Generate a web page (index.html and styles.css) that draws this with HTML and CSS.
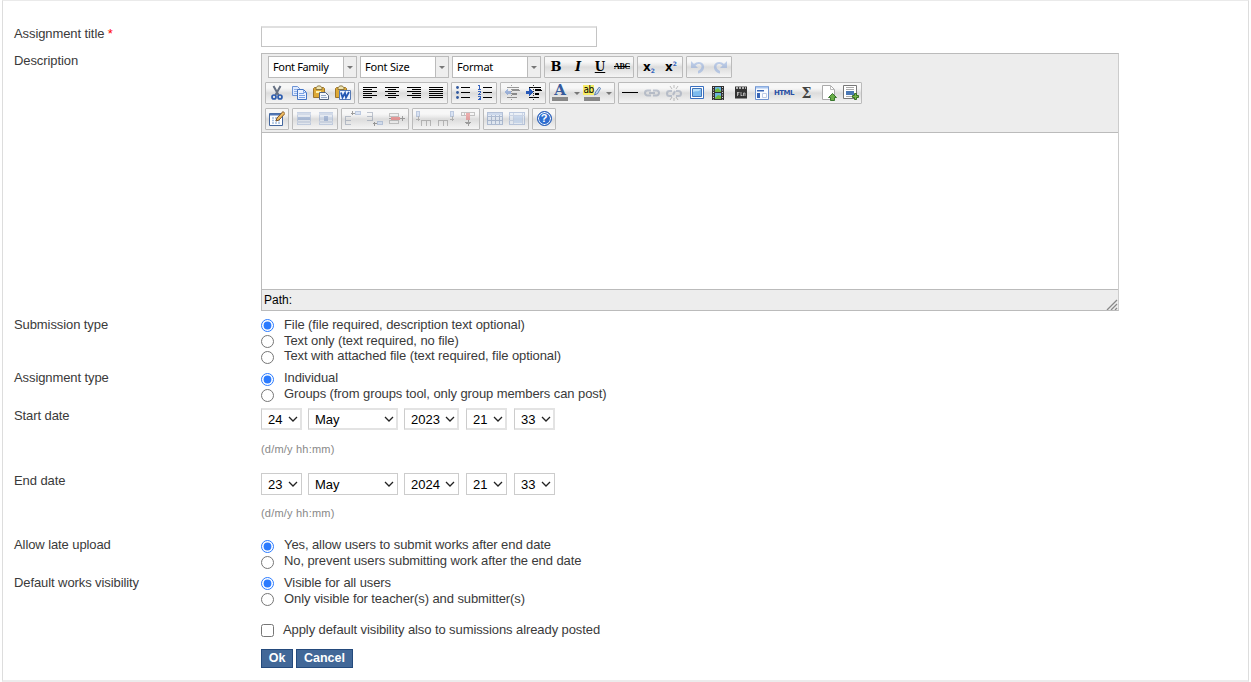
FILE: index.html
```html
<!DOCTYPE html>
<html lang="en">
<head>
<meta charset="utf-8">
<title>Assignment</title>
<link rel="stylesheet" href="styles.css">
</head>
<body>
<form class="panel">
  <div class="row row-title"><label class="label">Assignment title <span class="req">*</span></label><input class="title-input" type="text"></div>
  <div class="row row-desc"><label class="label">Description</label>
    <div class="editor">
      <div class="toolbar">
        <div class="bar bar-first">
          <div class="list"><span class="list-text family">Font Family</span><span class="list-arrow"></span></div>
          <div class="list"><span class="list-text">Font Size</span><span class="list-arrow"></span></div>
          <div class="list"><span class="list-text">Format</span><span class="list-arrow"></span></div>
          <div class="group">
            <span class="btn serif">B</span><span class="btn serif italic">I</span><span class="btn serif under">U</span><span class="btn strike">ABC</span>
          </div>
          <div class="group"><span class="btn script">x<sub>2</sub></span><span class="btn script">x<sup>2</sup></span></div>
          <div class="group">
            <span class="btn dim"><svg viewBox="0 0 16 16"><path d="M1 2v7h7L5.500 6.500C7 4.500 11 4 11.500 7c.3 2-1 4-3.500 5v2.500c4-1 6.500-4 6-7.500C13.300 2.500 7 1.500 4 5z" fill="#7c9fdc"/></svg></span>
            <span class="btn dim"><svg viewBox="0 0 16 16"><path d="M15 2v7H8l2.500-2.500C9 4.500 5 4 4.500 7c-.3 2 1 4 3.500 5v2.500C4 13.500 1.500 10.500 2 7 2.700 2.500 9 1.500 12 5z" fill="#7c9fdc"/></svg></span>
          </div>
        </div>
        <div class="bar">
          <div class="group">
            <span class="btn"><svg viewBox="0 0 16 16"><path d="M4.500 1l5 9M11.500 1l-5 9" fill="none" stroke="#657083" stroke-width="2"/><circle cx="5" cy="12" r="2" fill="none" stroke="#2d5cae" stroke-width="1.700"/><circle cx="11" cy="12" r="2" fill="none" stroke="#2d5cae" stroke-width="1.700"/></svg></span>
            <span class="btn"><svg viewBox="0 0 16 16"><path d="M1.500 1.500h5l2 2v7h-7z" fill="#e0ebff" stroke="#6d93d4"/><path d="M3 4.500h4M3 6.500h4M3 8.500h3" stroke="#8fb0e6"/><path d="M6.500 4.500h6l3 3v7h-9z" fill="#eaf2ff" stroke="#4474c4"/><path d="M12.500 4.500v3h3M8 8.500h5M8 10.500h6M8 12.500h6" fill="none" stroke="#7da3e4"/></svg></span>
            <span class="btn"><svg viewBox="0 0 16 16"><path d="M.5 3.500l1-1h9l1 1v9H.5z" fill="#dda936" stroke="#9b742c"/><path d="M3 3.500c0-3.500 6-3.500 6 0v1H3z" fill="#eee4b0" stroke="#8b763e"/><path d="M3 7h5" stroke="#fff2ae" stroke-width="2"/><path d="M6.500 7.500h6l3 3v4h-9z" fill="#f4f6fb" stroke="#53637f"/><path d="M8 10.500h5M8 12.500h6" stroke="#93a6c5"/></svg></span>
            <span class="btn"><svg viewBox="0 0 16 16"><path d="M.5 3.500l1-1h9l1 1v9H.5z" fill="#dda936" stroke="#9b742c"/><path d="M3 3.500c0-3.500 6-3.500 6 0v1H3z" fill="#eee4b0" stroke="#8b763e"/><path d="M4.500 5.500h11v9h-11z" fill="#eef4ff" stroke="#5579b5"/><path d="M6 7.500l1.500 5L10 8l1 4.500L14 7" fill="none" stroke="#2458b3" stroke-width="1.800"/></svg></span>
          </div>
          <div class="group">
            <span class="btn"><svg class="crisp" viewBox="0 0 16 16"><path d="M1 2.500h14M1 4.500h9M1 6.500h14M1 8.500h9M1 10.500h14M1 12.500h9" stroke="#000"/></svg></span>
            <span class="btn"><svg class="crisp" viewBox="0 0 16 16"><path d="M1 2.500h14M4 4.500h8M1 6.500h14M4 8.500h8M1 10.500h14M4 12.500h8" stroke="#000"/></svg></span>
            <span class="btn"><svg class="crisp" viewBox="0 0 16 16"><path d="M1 2.500h14M6 4.500h9M1 6.500h14M6 8.500h9M1 10.500h14M6 12.500h9" stroke="#000"/></svg></span>
            <span class="btn"><svg class="crisp" viewBox="0 0 16 16"><path d="M1 2.500h14M1 4.500h14M1 6.500h14M1 8.500h14M1 10.500h14M1 12.500h14" stroke="#000"/></svg></span>
          </div>
          <div class="group">
            <span class="btn"><svg viewBox="0 0 16 16"><path class="crisp" d="M6 2.500h9M6 7.500h9M6 12.500h9" stroke="#000"/><g fill="#31599f"><circle cx="2.500" cy="2.500" r="1.400"/><circle cx="2.500" cy="7.500" r="1.400"/><circle cx="2.500" cy="12.500" r="1.400"/></g></svg></span>
            <span class="btn"><svg class="crisp" viewBox="0 0 16 16"><path d="M6 2.500h9M6 7.500h9M6 12.500h9" stroke="#000"/><path d="M1 .5h1.500v4M1 4.500h3M1 6.500h2.500v1L1.500 9.500H4M1 11.500h2.500v3H1M2 13h2" fill="none" stroke="#3562bd"/></svg></span>
          </div>
          <div class="group">
            <span class="btn dim"><svg class="crisp" viewBox="0 0 16 16"><path d="M3 2.500h12M8 4.500h7M8 5.500h8M8 8.500h5M8 9.500h5M3 12.500h10" stroke="#222"/><path d="M7.500 0v16" stroke="#333" stroke-dasharray="1 1"/><path d="M7 5.500H4V3L0 7l4 4V8.500h3z" fill="#4c79cb"/></svg></span>
            <span class="btn"><svg class="crisp" viewBox="0 0 16 16"><path d="M3 2.500h12M9 4.500h6M9 5.500h7M9 8.500h4M9 9.500h4M3 12.500h10" stroke="#000"/><path d="M7.500 0v16" stroke="#333" stroke-dasharray="1 1"/><path d="M0 5.500h3V3l4 4-4 4V8.500H0z" fill="#2859b8"/></svg></span>
          </div>
          <div class="group">
            <span class="btn colored"><span class="letter-a">A</span></span><span class="split"></span>
            <span class="btn colored"><span class="letter-ab">ab</span><svg class="pen" viewBox="0 0 8 10"><path d="M6 .5L2 6 .5 9.500 4 8l3.500-6z" fill="#c7dbf2" stroke="#5278ad"/></svg></span><span class="split"></span>
          </div>
          <div class="group">
            <span class="btn"><svg class="crisp" viewBox="0 0 16 16"><path d="M0 7.500h16" stroke="#000"/></svg></span>
            <span class="btn dim"><svg viewBox="0 0 16 16"><path d="M7 5.500H3.500a2.500 2.500 0 0 0 0 5H7M9 5.500h3.500a2.500 2.500 0 0 1 0 5H9M5 8h6" fill="none" stroke="#8491aa" stroke-width="2"/></svg></span>
            <span class="btn dim"><svg viewBox="0 0 16 16"><path d="M6 6H3.500a2.500 2.500 0 0 0 0 5H6M10 6h2.500a2.500 2.500 0 0 1 0 5H10M7 10l2-4" fill="none" stroke="#8491aa" stroke-width="2"/><path d="M4 1l2 3M8 0v3M12 1l-2 3M4 15l2-3M8 16v-3M12 15l-2-3" stroke="#777"/></svg></span>
            <span class="btn"><svg class="shift" viewBox="0 0 16 16"><path d="M1.500 1.500h13v12h-13z" fill="#fff" stroke="#3970c0"/><path d="M3.500 3.500h9v8h-9z" fill="#7cbbee" stroke="#4174b8"/><path d="M4 7c3-2 5 1 8-3H4z" fill="#b7e0fb"/></svg></span>
            <span class="btn"><svg viewBox="0 0 16 16"><path d="M2 1h12v14H2z" fill="#333"/><path d="M5 2h6v5H5zM5 8h6v6H5z" fill="#69b5df"/><path d="M5 5l3-2 3 3v1H5zM5 13l3-3 3 1v3H5z" fill="#73b93c"/><path d="M3.500 2v13M12.500 2v13" stroke="#ddd" stroke-dasharray="1 1.500"/></svg></span>
            <span class="btn"><svg class="shift" viewBox="0 0 16 16"><path d="M2 1.500h12v12H2z" fill="#333"/><path d="M3 3h10" stroke="#ddd" stroke-width="1.500" stroke-dasharray="2 1"/><path d="M4.500 11V7M4.500 7.500h2M4.500 9h1.500M8 7v4M8 10.500h1.500M10.500 11V8h1.500v3" fill="none" stroke="#ccc" stroke-width=".8"/></svg></span>
            <span class="btn"><svg viewBox="0 0 16 16"><path d="M1.500 1.500h13v13h-13z" fill="#f9fcff" stroke="#6f93cf"/><path d="M2 2.500h12" stroke="#a8c5ee" stroke-width="2"/><path d="M3 5h7v1.500H3zM3 8h3v5H3z" fill="#3764b5"/><path d="M8.500 8.500h4v4h-4z" fill="#fff" stroke="#bccbe5"/></svg></span>
            <span class="btn html">HTML</span>
            <span class="btn sigma">Σ</span>
            <span class="btn"><svg class="shift" viewBox="0 0 16 16"><path d="M1.500.5h8l4 4v10h-12z" fill="#fff" stroke="#aaa"/><path d="M9.500.5v4h4" fill="none" stroke="#bbb"/><path d="M11.500 8.500l4 4h-2v3h-4v-3h-2z" fill="#69ae48" stroke="#39772d"/></svg></span>
            <span class="btn"><svg class="shift" viewBox="0 0 16 16"><path d="M.5.500h13v13H.5z" fill="#fff" stroke="#777"/><path d="M3 2.500h8M3 4.500h8M3 11.500h6" stroke="#aaa"/><path d="M3 6h8v4H3z" fill="#4a78b5"/><path d="M11.500 8.500h2v2h2v2h-2v2h-2v-2h-2v-2h2z" fill="#76b449" stroke="#386f23"/></svg></span>
          </div>
        </div>
        <div class="bar">
          <div class="group"><span class="btn"><svg viewBox="0 0 16 16"><path d="M.5 2.500h13v12H.5z" fill="#fff" stroke="#44679e"/><path d="M1 3.500h12" stroke="#5177b5" stroke-width="2"/><path d="M3 7h9M3 9.500h9M3 12h9" stroke="#a3bddf" stroke-width="1.500" stroke-dasharray="2 1"/><path d="M7 10l1-3 6-6.500 2 2L10 9z" fill="#efbc61" stroke="#805525"/></svg></span></div>
          <div class="group">
            <span class="btn dim"><svg class="crisp" viewBox="0 0 16 16"><path d="M1.500 1.500h13v12h-13z" fill="#d8e3f3" stroke="#8ea6cf"/><path d="M1 3h14M1 11h14" stroke="#a9bbd9" stroke-width="2"/><path d="M2 6h12v3H2z" fill="#6a8dc6"/></svg></span>
            <span class="btn dim"><svg class="crisp" viewBox="0 0 16 16"><path d="M1.500 1.500h13v12h-13z" fill="#d8e3f3" stroke="#8ea6cf"/><path d="M1 3h14M1 11h14" stroke="#a9bbd9" stroke-width="2"/><path d="M2 6h12v3H2z" fill="#b3c5e4"/><path d="M6 5h4v5H6z" fill="#5b7fbd"/></svg></span>
          </div>
          <div class="group">
            <span class="btn dim"><svg class="crisp" viewBox="0 0 16 16"><path d="M0 5.500h6M0 9.500h6M0 13.500h6M.5 5v9" stroke="#78869d"/><path d="M10.500.5h5v3h-5z" fill="#b8cdf0" stroke="#7895c5"/><path d="M10 2H6M7.500 0v4" stroke="#333"/></svg></span>
            <span class="btn dim"><svg class="crisp" viewBox="0 0 16 16"><path d="M0 1.500h5M0 5.500h5M0 9.500h6M5.500 1v9" stroke="#78869d"/><path d="M10.500 10.500h5v3h-5z" fill="#b8cdf0" stroke="#7895c5"/><path d="M10 12.500H6M7.500 10.500v4" stroke="#333"/></svg></span>
            <span class="btn dim"><svg class="crisp" viewBox="0 0 16 16"><path d="M.5 2.500h9v3h-9zM.5 9.500h9v3h-9z" fill="#eee" stroke="#888"/><path d="M0 7.500h16M13.500 5v5" stroke="#444"/><path d="M2 6h9v3H2z" fill="#e33a3a"/></svg></span>
          </div>
          <div class="group">
            <span class="btn dim"><svg class="crisp" viewBox="0 0 16 16"><path d="M.5 0h3v5h-3z" fill="#b8cdf0" stroke="#7895c5"/><path d="M2 5v5M0 8.500h4M5.500 15V9.500h9V15M10 9v6" fill="none" stroke="#777"/></svg></span>
            <span class="btn dim"><svg class="crisp" viewBox="0 0 16 16"><path d="M12.500 0h3v5h-3z" fill="#b8cdf0" stroke="#7895c5"/><path d="M14 5v5M12 8.500h4M.5 15V9.500h9V15M5 9v6" fill="none" stroke="#777"/></svg></span>
            <span class="btn dim"><svg class="crisp" viewBox="0 0 16 16"><path d="M1 1.500h14M1.500 1v4M14.500 1v4M2 4.500h12M4.500 1v4" fill="none" stroke="#888"/><path d="M6 2h4v7H6z" fill="#e35a5a"/><path d="M8 9v6M5 11.500h6M6 12.500h4" stroke="#444"/></svg></span>
          </div>
          <div class="group">
            <span class="btn dim"><svg class="crisp" viewBox="0 0 16 16"><path d="M.5 1.500h15v12H.5z" fill="#d9e7fb" stroke="#6482b3"/><path d="M1 3h14" stroke="#9db8e2" stroke-width="2"/><path d="M0 5.500h16M0 9.500h16M4.500 4v10M8.500 4v10M12.500 4v10" stroke="#6482b3"/></svg></span>
            <span class="btn dim"><svg class="crisp" viewBox="0 0 16 16"><path d="M.5 1.500h15v12H.5z" fill="#e0ebfa" stroke="#7895c5"/><path d="M5 5h8v7H5z" fill="#a5c4ef"/><path d="M0 4.500h16M0 9.500h4M4.500 2v11M13.500 2v11" fill="none" stroke="#9cb2d7"/></svg></span>
          </div>
          <div class="group"><span class="btn"><span class="help">?</span></span></div>
        </div>
      </div>
      <div class="canvas"></div>
      <div class="status"><span>Path:</span><svg class="resize" viewBox="0 0 12 12"><path d="M1 12L11 2M5 12l6-6M9 12l2-2" stroke="#888" stroke-width="1.300"/></svg></div>
    </div>
  </div>
  <div class="row row-sub"><span class="label">Submission type</span>
    <div>
      <label class="option low"><input type="radio" name="sub" checked>File (file required, description text optional)</label>
      <label class="option low"><input type="radio" name="sub">Text only (text required, no file)</label>
      <label class="option"><input type="radio" name="sub">Text with attached file (text required, file optional)</label>
    </div>
  </div>
  <div class="row row-type"><span class="label">Assignment type</span>
    <div>
      <label class="option"><input type="radio" name="type" checked>Individual</label>
      <label class="option"><input type="radio" name="type">Groups (from groups tool, only group members can post)</label>
    </div>
  </div>
  <div class="row row-start"><span class="label">Start date</span>
    <div>
      <div class="dates start">
        <span class="pick"><select><option>24</option></select><svg viewBox="0 0 10 6"><path d="M1 1l4 4 4-4"/></svg></span>
        <span class="pick month"><select><option>May</option></select><svg viewBox="0 0 10 6"><path d="M1 1l4 4 4-4"/></svg></span>
        <span class="pick year"><select><option>2023</option></select><svg viewBox="0 0 10 6"><path d="M1 1l4 4 4-4"/></svg></span>
        <span class="pick time"><select><option>21</option></select><svg viewBox="0 0 10 6"><path d="M1 1l4 4 4-4"/></svg></span>
        <span class="pick time"><select><option>33</option></select><svg viewBox="0 0 10 6"><path d="M1 1l4 4 4-4"/></svg></span>
      </div>
      <div class="hint">(d/m/y hh:mm)</div>
    </div>
  </div>
  <div class="row row-end"><span class="label">End date</span>
    <div>
      <div class="dates end">
        <span class="pick"><select><option>23</option></select><svg viewBox="0 0 10 6"><path d="M1 1l4 4 4-4"/></svg></span>
        <span class="pick month"><select><option>May</option></select><svg viewBox="0 0 10 6"><path d="M1 1l4 4 4-4"/></svg></span>
        <span class="pick year"><select><option>2024</option></select><svg viewBox="0 0 10 6"><path d="M1 1l4 4 4-4"/></svg></span>
        <span class="pick time"><select><option>21</option></select><svg viewBox="0 0 10 6"><path d="M1 1l4 4 4-4"/></svg></span>
        <span class="pick time"><select><option>33</option></select><svg viewBox="0 0 10 6"><path d="M1 1l4 4 4-4"/></svg></span>
      </div>
      <div class="hint">(d/m/y hh:mm)</div>
    </div>
  </div>
  <div class="row row-late"><span class="label">Allow late upload</span>
    <div>
      <label class="option"><input type="radio" name="late" checked>Yes, allow users to submit works after end date</label>
      <label class="option"><input type="radio" name="late">No, prevent users submitting work after the end date</label>
    </div>
  </div>
  <div class="row row-vis"><span class="label">Default works visibility</span>
    <div>
      <label class="option low"><input type="radio" name="vis" checked>Visible for all users</label>
      <label class="option low"><input type="radio" name="vis">Only visible for teacher(s) and submitter(s)</label>
    </div>
  </div>
  <div class="row row-apply"><span></span><label class="option low check"><input type="checkbox">Apply default visibility also to sumissions already posted</label></div>
  <div class="row"><span></span><div class="actions"><button type="button" class="ok">Ok</button><button type="button" class="cancel">Cancel</button></div></div>
</form>
</body>
</html>
```

FILE: styles.css
```css
* { box-sizing: border-box; }
body { margin: 0; background: #fff; color: #3a3a3a; font: 13px/16px "Liberation Sans", Arial, sans-serif; letter-spacing: -.09px; overflow: hidden; }
.panel { width: 1247px; height: 682px; margin-left: 2px; padding: 25px 0 0 11px; border: 1px solid #ddd; border-top-color: #eaeaea; border-bottom: 2px solid #ececec; }
.row { display: grid; grid-template-columns: 247px 1fr; align-items: start; }
.row-title { height: 27px; }
.row-desc { height: 264px; }
.row-sub { height: 54px; }
.row-type { height: 37px; }
.row-start { height: 65px; }
.row-end { height: 65px; }
.row-late { height: 37px; }
.row-vis { height: 47px; }
.row-apply { height: 27px; }
.req { color: red; }
.row-type .label, .row-late .label { margin-top: -1px; }
.title-input { width: 336px; height: 21px; border: 1px solid #c4c4c4; border-top: 2px solid #e0e0e0; padding: 0; }

.editor { display: flex; flex-direction: column; width: 858px; height: 258px; border: 1px solid #bbb; border-right-color: #ccc; letter-spacing: 0; }
.toolbar { height: 78px; padding: 2px 3px 0; background: #ededed; }
.bar { display: flex; gap: 3px; height: 22px; margin-bottom: 4px; }
.bar-first { padding-left: 3px; }
.list { display: flex; width: 89px; border: 1px solid #bbb; background: #fff; color: #000; font: 11px/20px "Noto Sans", sans-serif; letter-spacing: -.2px; }
.list-text { flex: 1; padding-left: 4px; white-space: nowrap; }
.family { letter-spacing: -.36px; }
.list-arrow { display: grid; place-items: center; width: 13px; border-left: 1px solid #bbb; background: #eee; }
.list-arrow::after, .split::after { content: ""; border: 3px solid transparent; border-top-color: #777; border-bottom: 0; }
.group { display: flex; border: 1px solid #bbb; border-radius: 1px; background: linear-gradient(#f7f7f7 0 25%, #e9e9e9 40%, #dcdcdc 50%, #e6e6e6 70%, #f5f5f5); }
.btn { display: flex; align-items: center; justify-content: center; width: 22px; height: 20px; color: #000; }
.btn svg { width: 16px; height: 16px; }
.btn .shift { transform: translateX(1px); }
.crisp { shape-rendering: crispEdges; }
.dim { opacity: .45; }
.serif { font: bold 13px/20px "DejaVu Serif", serif; }
.italic { font-style: italic; }
.under { font-size: 12px; text-decoration: underline; }
.strike { font: bold 8px/20px "Liberation Serif", serif; letter-spacing: -.3px; text-decoration: line-through; }
.script { font: bold 12px/18px "DejaVu Sans", sans-serif; }
.script sub, .script sup { color: #3264bd; font-size: 6px; line-height: 7px; }
.script sub { align-self: flex-end; margin-bottom: 3px; }
.script sup { align-self: flex-start; margin-top: 3px; }
.split { display: grid; place-items: center; width: 10px; }
.colored { background: linear-gradient(#888, #888) 2px 14px / 16px 4px no-repeat; align-items: flex-start; padding-right: 2px; }
.letter-a { color: #365b9c; font: bold 15px/15px "DejaVu Serif", serif; }
.letter-ab { height: 10px; margin-top: 2px; background: #f5ec67; font: 10px/9px "DejaVu Sans Condensed", sans-serif; letter-spacing: -.5px; }
.colored .pen { width: 7px; height: 10px; margin-top: 3px; }
.html { color: #2950a4; font: bold 7px/18px "DejaVu Sans", sans-serif; letter-spacing: -.5px; }
.sigma { color: #444; font: bold 14px/18px "DejaVu Serif", serif; padding-left: 1px; }
.help { width: 15px; height: 15px; border: 1px solid #2459b4; border-radius: 50%; background: #2f6ed0; box-shadow: inset 0 0 0 1px #fff; color: #fff; font: bold 11px/13px "Liberation Sans", sans-serif; text-align: center; transform: translateY(-1px); }
.canvas { flex: 1; border-top: 1px solid #bbb; }
.status { display: flex; justify-content: space-between; height: 21px; border-top: 1px solid #bbb; padding-left: 2px; background: #ededed; color: #000; font-size: 12px; line-height: 20px; }
.resize { align-self: flex-end; width: 12px; height: 12px; }

.option { display: flex; height: 16px; line-height: 14px; white-space: nowrap; }
.option input { flex: none; width: 13px; height: 13px; margin: 2px 10px 0 0; accent-color: #2b7bff; }
.option.low { line-height: 16px; }
.option.check input { margin-right: 9px; }
.dates { display: flex; }
.pick { display: grid; width: 41px; height: 22px; align-items: center; }
.month { width: 90px; margin: 0 6px; }
.year { width: 55px; }
.time { margin-left: 7px; }
.pick select { grid-area: 1 / 1; width: 100%; height: 100%; padding: 0 0 0 6px; appearance: none; border: 1px solid #ccc; border-radius: 0; background: #fff; color: #000; font: 13px "Liberation Sans", sans-serif; }
.start select { border-width: 2px 2px 2px 1px; border-color: #e3e3e3 #e3e3e3 #e3e3e3 #ccc; }
.pick svg { grid-area: 1 / 1; justify-self: end; width: 10px; height: 6px; margin-right: 4px; pointer-events: none; fill: none; stroke: #222; stroke-width: 1.3; }
.hint { margin-top: 11px; color: #888; font-size: 11px; letter-spacing: .2px; }
.end + .hint { margin-top: 10px; }
.actions { display: flex; gap: 3px; }
.actions button { height: 19px; padding: 0; border: 1px solid #244a7c; background: #426898; color: #fff; font: bold 12.500px/17px "Liberation Sans", sans-serif; }
.ok { width: 32px; }
.cancel { width: 57px; }
```
